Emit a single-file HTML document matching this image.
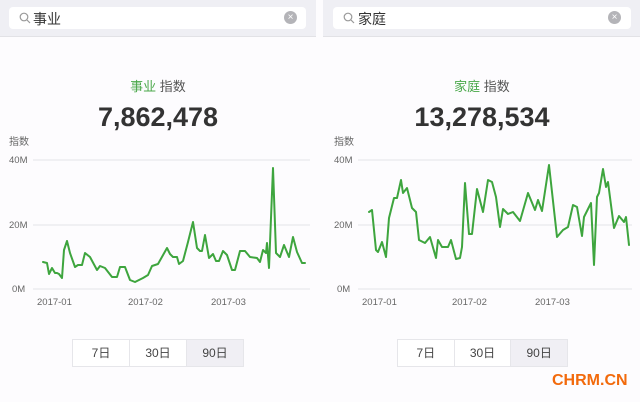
<!DOCTYPE html>
<html><head><meta charset="utf-8"><style>
*{margin:0;padding:0;box-sizing:border-box}
body{width:640px;height:402px;background:#fdfcfe;position:relative;overflow:hidden;font-family:"Liberation Sans","Noto Sans CJK SC",sans-serif}
.a{position:absolute}
.hdr{top:0;height:37px;background:#efeff4;border-bottom:1px solid #e2e2e6}
.sb{top:7px;height:22px;background:#fff;border-radius:4px}
.t{font-size:14px;color:#333}
.clr{width:13px;height:13px;border-radius:50%;background:#b4b4b8;top:11px;color:#fff;font-size:10px;line-height:13px;text-align:center}
.ttl{top:76px;font-size:13px;color:#555;text-align:center;width:316px}
.ttl b{color:#4aa84a;font-weight:normal}
.num{top:102px;font-size:27px;font-weight:bold;color:#333;text-align:center;width:316px}
.lab{color:#666}
.btns{top:339px;height:28px;display:flex;border:1px solid #e6e6ea;background:#fff}
.btns div{flex:1;text-align:center;font-size:12px;color:#444;line-height:26px;border-right:1px solid #e6e6ea}
.btns div:last-child{border-right:none;background:#f0eff4}
</style></head><body>
<div class="a hdr" style="left:0;width:316px"></div>
<div class="a hdr" style="left:323px;width:317px"></div>
<div class="a sb" style="left:9px;width:297px"></div>
<div class="a sb" style="left:333px;width:298px"></div>
<svg class="a" style="left:19px;top:12px" width="12" height="12"><circle cx="5" cy="5" r="3.8" fill="none" stroke="#999" stroke-width="1.2"/><line x1="8" y1="8" x2="11" y2="11" stroke="#999" stroke-width="1.2"/></svg>
<svg class="a" style="left:343px;top:12px" width="12" height="12"><circle cx="5" cy="5" r="3.8" fill="none" stroke="#999" stroke-width="1.2"/><line x1="8" y1="8" x2="11" y2="11" stroke="#999" stroke-width="1.2"/></svg>
<div class="a t" style="left:33px;top:9px">事业</div>
<div class="a t" style="left:358px;top:9px">家庭</div>
<div class="a clr" style="left:284px">×</div>
<div class="a clr" style="left:608px">×</div>

<div class="a ttl" style="left:0"><b>事业</b> 指数</div>
<div class="a ttl" style="left:324px"><b>家庭</b> 指数</div>
<div class="a num" style="left:0">7,862,478</div>
<div class="a num" style="left:324px">13,278,534</div>

<div class="a lab" style="left:9px;top:133px;font-size:10px">指数</div>
<div class="a lab" style="left:334px;top:133px;font-size:10px">指数</div>

<svg class="a" style="left:0;top:0" width="640" height="402">
<g stroke="#e4e4e8" stroke-width="1">
<line x1="33" y1="160" x2="310" y2="160"/><line x1="33" y1="225" x2="310" y2="225"/><line x1="33" y1="289" x2="310" y2="289"/>
<line x1="358" y1="160" x2="632" y2="160"/><line x1="358" y1="225" x2="632" y2="225"/><line x1="358" y1="289" x2="632" y2="289"/>
</g>
<g font-size="9.5" fill="#666" font-family="Liberation Sans,sans-serif">
<text x="9" y="163">40M</text><text x="9" y="228">20M</text><text x="12" y="292">0M</text>
<text x="334" y="163">40M</text><text x="334" y="228">20M</text><text x="337" y="292">0M</text>
<text x="37" y="305">2017-01</text><text x="128" y="305">2017-02</text><text x="211" y="305">2017-03</text>
<text x="362" y="305">2017-01</text><text x="452" y="305">2017-02</text><text x="535" y="305">2017-03</text>
</g>
<polyline fill="none" stroke="#3ea53e" stroke-width="2" stroke-linejoin="round" stroke-linecap="round" points="43,262 47,263 49,274 52,268 55,273 57,273 59,274 62,278 64,250 67,241 70,253 75,267 78,265 82,265 85,253 90,257 97,270 100,266 105,268 112,277 117,277 120,267 125,267 130,280 135,282 143,278 148,275 152,266 158,264 167,248 170,254 173,257 177,257 179,264 183,261 188,242 193,222 197,248 200,251 202,251 205,235 209,258 213,254 216,261 219,261 223,251 227,255 232,270 235,270 240,251 245,251 250,257 257,258 260,262 263,250 266,253 267,243 269,268 273,168 276,253 280,257 284,245 289,257 293,237 297,252 302,263 305,263"/>
<polyline fill="none" stroke="#3ea53e" stroke-width="2" stroke-linejoin="round" stroke-linecap="round" points="369,212 372,210 376,250 378,252 382,242 386,257 389,218 394,198 397,198 401,180 403,193 407,188 412,208 416,212 419,240 425,243 430,237 436,258 438,240 442,247 448,247 451,240 456,259 460,258 462,247 465,183 469,234 472,234 477,189 483,212 488,180 492,182 496,197 500,227 503,209 508,214 513,212 520,221 528,193 535,210 538,200 542,211 549,165 557,237 563,230 568,227 573,205 577,207 582,236 584,217 591,203 594,265 597,197 599,193 603,169 606,187 608,182 614,228 619,216 624,222 626,217 629,245"/>
</svg>

<div class="a btns" style="left:72px;width:172px"><div>7日</div><div>30日</div><div>90日</div></div>
<div class="a btns" style="left:397px;width:171px"><div>7日</div><div>30日</div><div>90日</div></div>
<div class="a" style="left:552px;top:372px;font-size:16px;font-weight:bold;color:#f26a0c">CHRM.CN</div>
</body></html>
